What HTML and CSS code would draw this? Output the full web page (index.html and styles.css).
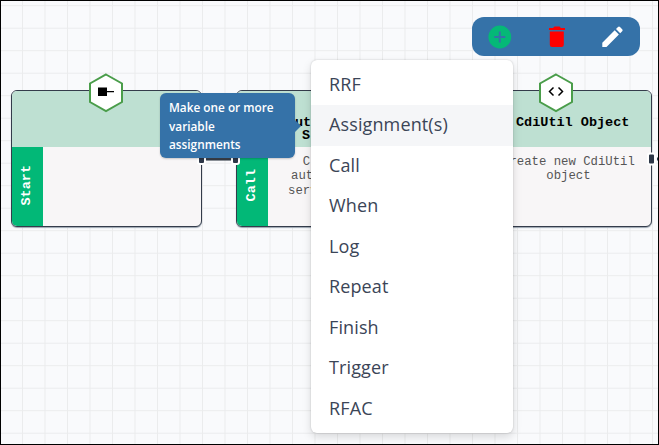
FILE: index.html
```html
<!DOCTYPE html>
<html lang="en">
<head>
<meta charset="utf-8">
<title>Flow editor</title>
<link rel="stylesheet" href="styles.css">
</head>
<body>
<main class="canvas">
  <svg class="grid" width="659" height="445">
    <defs><pattern id="cells" x="-.5" y="5.2" width="22.5" height="22.5" patternUnits="userSpaceOnUse"><path d="M0 .5H22.5M.5 0V22.5" stroke="#ebeced" fill="none"/></pattern></defs>
    <rect width="659" height="445" fill="url(#cells)"/>
  </svg>

  <section class="node node-start">
    <header class="node-head"></header>
    <div class="node-body"><div class="kind"><span>Start</span></div></div>
    <svg class="hex" width="36" height="40" viewBox="0 0 36 40"><path d="M18 1.5 34 10.5V29L18 38 2 29V10.5Z" fill="#fff" stroke="#4a9d4a" stroke-width="2"/><path d="M10 14.500h9v3.500h7v1.200h-7V23h-9Z"/></svg>
  </section>
  <section class="node node-call">
    <header class="node-head"><h2 class="first">ut</h2><h2 class="second">S</h2></header>
    <div class="node-body"><div class="kind"><span>Call</span></div><div class="lines"><p>&nbsp; C</p><p class="mid">aut</p><p>serv</p></div></div>
  </section>
  <section class="node node-object">
    <header class="node-head"><h2>CdiUtil Object</h2></header>
    <div class="node-body"><p class="description">Create new CdiUtil<br>object</p></div>
    <svg class="hex" width="36" height="40" viewBox="0 0 36 40"><path d="M18 1.5 34 10.5V29L18 38 2 29V10.5Z" fill="#fff" stroke="#4a9d4a" stroke-width="2"/><path d="m15.500 14.500-4 4 4 4m5-8 4 4-4 4" fill="none" stroke="#000" stroke-width="1.5"/></svg>
  </section>

  <svg class="links" width="659" height="445">
    <path d="M206 159.3H231" stroke="#343c47" stroke-width="2.5"/>
    <g fill="#2d3748" stroke="#fff" stroke-width="2">
      <rect x="198" y="153" width="7" height="11" rx="2"/>
      <rect x="232" y="153" width="7" height="11" rx="2"/>
      <rect x="648" y="153.500" width="7" height="11" rx="2"/>
    </g>
    <path d="M657 159H659" stroke="#2d3748" stroke-width="3"/>
  </svg>

  <div class="toolbar">
    <svg width="24" height="24" viewBox="0 0 24 24"><circle cx="11.800" cy="12" r="11.400" fill="#05b877"/><path d="M11.800 6.500v11M6.300 12h11" stroke="#3572a8" stroke-width="2"/></svg>
    <svg width="24" height="24" viewBox="0 0 24 24"><path d="M5.800 6.500h14v13.200q0 2.300-2.300 2.300H8.100q-2.300 0-2.300-2.300ZM5 3h4l1.500-1.500h5L17 3h4v2H5Z" fill="#f00"/></svg>
    <svg width="24" height="24" viewBox="0 0 24 24"><path d="M2.300 17.700 14.700 5.300l4.200 4.200L6.500 21.900H2.300ZM16 4l2-2q1-1 2 0l2.200 2.200q1 1 0 2l-2 2Z" fill="#fff"/></svg>
  </div>

  <div class="tooltip">Make one or more<br>variable<br>assignments</div>

  <ul class="menu">
    <li>RRF</li>
    <li class="active">Assignment(s)</li>
    <li>Call</li>
    <li>When</li>
    <li>Log</li>
    <li>Repeat</li>
    <li>Finish</li>
    <li>Trigger</li>
    <li>RFAC</li>
  </ul>
  <div class="frame"></div>
</main>
</body>
</html>
```
FILE: styles.css
```css
* { box-sizing: border-box; }
body { margin: 0; }
h2, p { margin: 0; }
.canvas {
  position: relative;
  width: 659px;
  height: 445px;
  overflow: hidden;
  background: #f9fafc;
  font-family: "Open Sans", sans-serif;
}
.grid, .links { position: absolute; inset: 0; }
.frame { position: absolute; inset: 0; border: 1px solid #000; }

.node {
  position: absolute;
  top: 90px;
  width: 191px;
  height: 137px;
  border: 1px solid #343c4b;
  border-radius: 6px;
  background: #f8f6f7;
  font-family: "Liberation Mono", monospace;
  box-shadow: 0 1px 1px #9ba5b0;
}
.node-start { left: 11px; }
.node-call { left: 236px; }
.node-object { left: 461px; }
.node-head {
  height: 56px;
  padding-top: 25px;
  border-radius: 5px 5px 0 0;
  background: #bee0d2;
}
.node-head h2 { font-size: 13.5px; line-height: 13px; font-weight: 700; }
.node-head .first { padding-left: 58px; }
.node-head .second { padding-left: 65px; }
.node-object .node-head h2 { padding-left: 54px; }
.node-body { display: flex; height: 79px; }
.kind {
  display: flex;
  align-items: center;
  justify-content: center;
  width: 31px;
  padding: 0 2px 2px 0;
  background: #02b877;
  border-radius: 0 0 0 5px;
  color: #fff;
  font-size: 13.5px;
  font-weight: 700;
}
.kind span { writing-mode: vertical-rl; transform: rotate(180deg); }
.node-body p { color: #555; font-size: 12.3px; line-height: 14.3px; }
.lines { padding: 8px 0 0 20px; }
.lines .mid { padding-left: 3px; }
.node-body .description { margin: 8px 0 0 40px; text-align: center; white-space: nowrap; }
.hex { position: absolute; left: 76px; top: -18px; }

.toolbar {
  position: absolute;
  left: 472px;
  top: 17px;
  width: 168px;
  height: 39px;
  display: flex;
  align-items: center;
  justify-content: space-between;
  padding: 0 16px;
  border-radius: 12px;
  background: #3572a8;
}
.tooltip {
  position: absolute;
  left: 160px;
  top: 93px;
  width: 135px;
  height: 65px;
  padding: 5px 9px;
  border-radius: 6px;
  background: #3572a8;
  color: #fff;
  font-size: 11.8px;
  font-weight: 600;
  line-height: 18.5px;
  white-space: nowrap;
  box-shadow: 0 1px 2px #0003;
}
.tooltip::after {
  content: "";
  position: absolute;
  left: 135px;
  top: 27px;
  border: 6px solid transparent;
  border-left-color: #3572a8;
  border-right: 0;
}
.menu {
  position: absolute;
  left: 311px;
  top: 60px;
  width: 202px;
  height: 373px;
  margin: 0;
  padding: 4.5px 0;
  list-style: none;
  border-radius: 6px;
  background: #fff;
  box-shadow: 0 4px 10px #0002, 0 0 2px #0003;
  color: #3b4557;
  font-size: 18px;
  letter-spacing: .12px;
}
.menu li { height: 40.5px; padding-left: 18px; line-height: 38px; }
.menu .active { background: #f5f6f8; }
```
